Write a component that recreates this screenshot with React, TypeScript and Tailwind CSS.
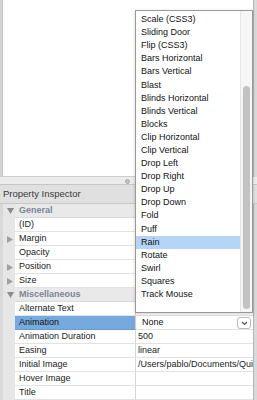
import React from "react";

const items = [
  "Scale (CSS3)",
  "Sliding Door",
  "Flip (CSS3)",
  "Bars Horizontal",
  "Bars Vertical",
  "Blast",
  "Blinds Horizontal",
  "Blinds Vertical",
  "Blocks",
  "Clip Horizontal",
  "Clip Vertical",
  "Drop Left",
  "Drop Right",
  "Drop Up",
  "Drop Down",
  "Fold",
  "Puff",
  "Rain",
  "Rotate",
  "Swirl",
  "Squares",
  "Track Mouse",
];

type Row = {
  kind: "cat" | "prop";
  name: string;
  tri?: "down" | "right";
  value?: string;
  selected?: boolean;
  select?: boolean;
};

const rows: Row[] = [
  { kind: "cat", name: "General", tri: "down" },
  { kind: "prop", name: "(ID)" },
  { kind: "prop", name: "Margin", tri: "right" },
  { kind: "prop", name: "Opacity" },
  { kind: "prop", name: "Position", tri: "right" },
  { kind: "prop", name: "Size", tri: "right" },
  { kind: "cat", name: "Miscellaneous", tri: "down" },
  { kind: "prop", name: "Alternate Text" },
  { kind: "prop", name: "Animation", selected: true, value: "None", select: true },
  { kind: "prop", name: "Animation Duration", value: "500" },
  { kind: "prop", name: "Easing", value: "linear" },
  { kind: "prop", name: "Initial Image", value: "/Users/pablo/Documents/Quick" },
  { kind: "prop", name: "Hover Image" },
  { kind: "prop", name: "Title" },
];

function Tri({ dir }: { dir: "down" | "right" }) {
  return dir === "down" ? (
    <svg width="7" height="6" viewBox="0 0 7 6">
      <path d="M0 0 L7 0 L3.5 6 Z" fill="#8c8c8c" />
    </svg>
  ) : (
    <svg width="6" height="7" viewBox="0 0 6 7">
      <path d="M0 0 L6 3.5 L0 7 Z" fill="#a0a0a0" />
    </svg>
  );
}

export default function App() {
  return (
    <div className="relative w-[257px] h-[400px] overflow-hidden bg-[#e6e6e6] flex flex-col font-['Liberation_Sans',Arial,sans-serif] text-[9px] leading-none text-[#1a1a1a]">
      {/* top pane */}
      <div className="h-[177px] flex shrink-0">
        <div className="w-[3px] bg-[#d4d4d4] border-r border-[#c4c4c4]" />
        <div className="flex-1 bg-white border-b border-[#cfcfcf]" />
        <div className="w-[4px] bg-[#d9d9d9] border-l border-[#b5b5b5]" />
      </div>
      {/* splitter */}
      <div className="h-[7px] shrink-0 bg-[#ececec] relative">
        <div className="absolute left-[125px] top-[2px] w-[5px] h-[5px] rounded-full bg-[#c2c2c2] border border-[#aaaaaa]" />
      </div>
      {/* header */}
      <div className="h-[20px] shrink-0 bg-[#e0e0e0] border-y border-[#c6c6c6] flex items-center pl-[3px] text-[#3a3a3a] text-[9.5px]">
        Property Inspector
      </div>
      {/* rows */}
      <div className="flex-1 flex flex-col">
        {rows.map((r, i) => (
          <div key={i} className="h-[14px] shrink-0 flex">
            <div className="w-[15px] shrink-0 bg-[#e6e6e6] border-l-[3px] border-[#d8d8d8] flex items-center pl-[4px]">
              {r.tri ? <Tri dir={r.tri} /> : null}
            </div>
            {r.kind === "cat" ? (
              <div className="flex-1 bg-[#e9e9e9] border-b border-[#dadada] flex items-center pl-[4px] text-[#7b8594] font-bold">
                {r.name}
              </div>
            ) : (
              <>
                <div
                  className={
                    r.selected
                      ? "w-[121px] shrink-0 bg-[#76a9dd] border-b border-[#6a9ad0] border-r border-r-[#d0d0d0] flex items-center pl-[4px] text-[#111]"
                      : "w-[121px] shrink-0 bg-white border-b border-[#e2e2e2] border-r border-r-[#d8d8d8] flex items-center pl-[4px] text-[#222]"
                  }
                >
                  {r.name}
                </div>
                <div className="flex-1 min-w-0 bg-white border-b border-[#e2e2e2] flex items-center pl-[2px] text-[#222] whitespace-nowrap overflow-hidden relative">
                  {r.select ? (
                    <>
                      <span className="pl-[4px] text-[#111]">{r.value}</span>
                      <div className="absolute right-[2px] top-[1px] w-[14px] h-[12px] bg-white border border-[#bdbdbd] rounded-[3px] flex items-center justify-center">
                        <svg width="7" height="5" viewBox="0 0 7 5">
                          <path d="M1 1 L3.5 3.5 L6 1" stroke="#555" strokeWidth="1.2" fill="none" />
                        </svg>
                      </div>
                    </>
                  ) : (
                    <span>{r.value}</span>
                  )}
                </div>
              </>
            )}
            <div className="w-[4px] shrink-0 bg-[#d9d9d9] border-l border-[#b5b5b5]" />
          </div>
        ))}
      </div>

      {/* dropdown menu overlay */}
      <div className="absolute left-[135px] top-[10px] w-[118px] h-[303px] bg-white border border-[#9a9a9a] shadow-[0_1px_3px_rgba(0,0,0,0.2)] flex overflow-hidden">
        <div className="flex-1 flex flex-col pt-[2px]">
          {items.map((t) => (
            <div
              key={t}
              className={
                t === "Rain"
                  ? "h-[13.1px] shrink-0 flex items-center pl-[5px] bg-[#b4d5f8] text-[#111]"
                  : "h-[13.1px] shrink-0 flex items-center pl-[5px] text-[#111]"
              }
            >
              {t}
            </div>
          ))}
        </div>
        <div className="w-[12px] shrink-0 bg-[#f6f6f6] border-l border-[#e6e6e6] relative">
          <div className="absolute left-[2px] top-[75px] w-[7px] h-[223px] rounded-full bg-[#c2c2c2]" />
        </div>
      </div>
    </div>
  );
}
